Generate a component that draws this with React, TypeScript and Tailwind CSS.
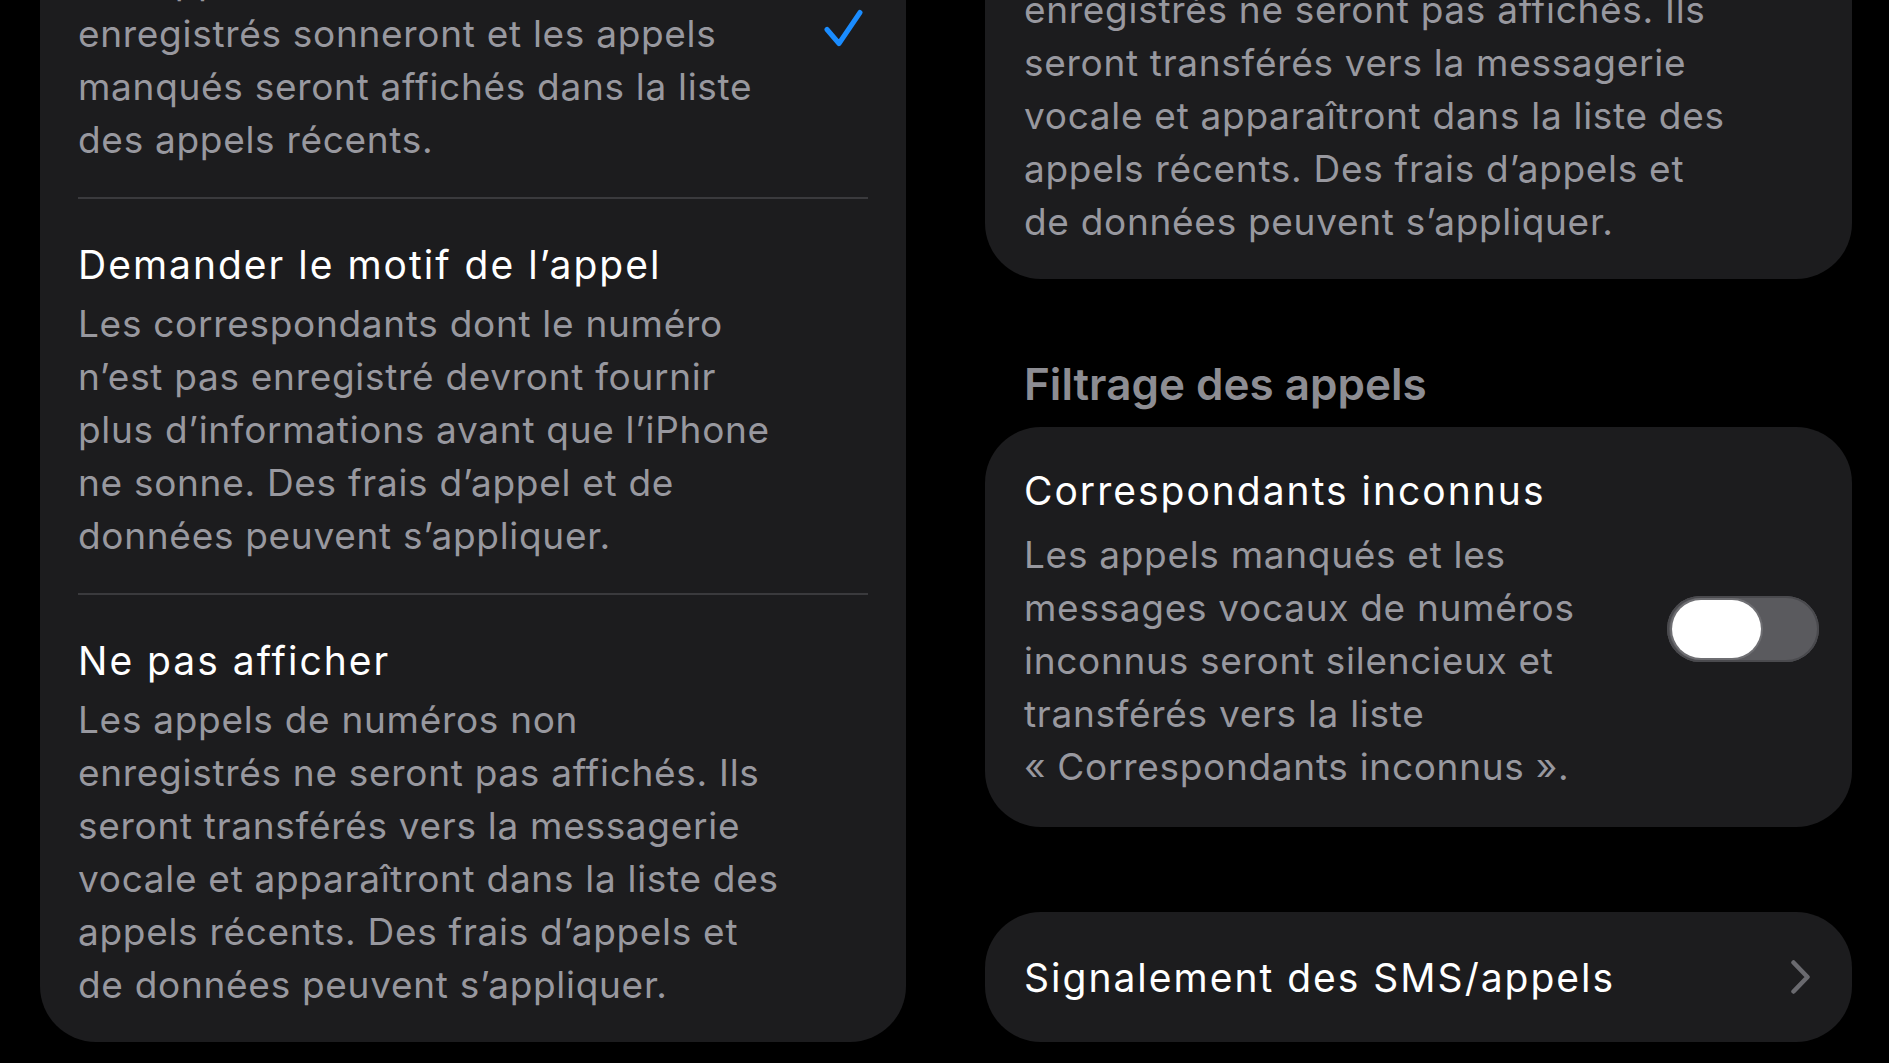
import React from "react";

type Option = {
  title: string;
  lines: string[];
  checked?: boolean;
};

const options: Option[] = [
  {
    title: "Ne pas filtrer",
    lines: [
      "Les appels de numéros non",
      "enregistrés sonneront et les appels",
      "manqués seront affichés dans la liste",
      "des appels récents.",
    ],
    checked: true,
  },
  {
    title: "Demander le motif de l’appel",
    lines: [
      "Les correspondants dont le numéro",
      "n’est pas enregistré devront fournir",
      "plus d’informations avant que l’iPhone",
      "ne sonne. Des frais d’appel et de",
      "données peuvent s’appliquer.",
    ],
  },
  {
    title: "Ne pas afficher",
    lines: [
      "Les appels de numéros non",
      "enregistrés ne seront pas affichés. Ils",
      "seront transférés vers la messagerie",
      "vocale et apparaîtront dans la liste des",
      "appels récents. Des frais d’appels et",
      "de données peuvent s’appliquer.",
    ],
  },
];

function Lines({ lines }: { lines: string[] }) {
  return (
    <div className="text-[37px] leading-[53px] tracking-[0.7px] text-[#98989f]">
      {lines.map((l) => (
        <div key={l} className="whitespace-nowrap">
          {l}
        </div>
      ))}
    </div>
  );
}

function Check() {
  return (
    <svg width="40" height="40" viewBox="0 0 40 40" className="-mt-[4px] mr-[4px] shrink-0">
      <path
        d="M3 20.5 L15 34.5 L36 3.5"
        fill="none"
        stroke="#1a8cff"
        strokeWidth="5"
        strokeLinecap="round"
        strokeLinejoin="round"
      />
    </svg>
  );
}

function OptionRow({ opt }: { opt: Option }) {
  return (
    <div className="flex items-center pt-[39px] pb-[31px]">
      <div className="flex-1">
        <div className="text-[39px] leading-[53px] tracking-[2px] text-white">{opt.title}</div>
        <div className="mt-[6px]">
          <Lines lines={opt.lines} />
        </div>
      </div>
      {opt.checked && <Check />}
    </div>
  );
}

function Toggle() {
  return (
    <div className="flex h-[66px] w-[152px] shrink-0 items-center rounded-full bg-[#5a5a5e] p-[5px] shadow-[inset_0_0_0_2px_#4a4a4e]">
      <div className="h-[58px] w-[89px] rounded-full bg-white shadow-[0_0_0_2px_#6e6e72]" />
    </div>
  );
}

function Chevron() {
  return (
    <svg width="20" height="34" viewBox="0 0 20 34" className="shrink-0">
      <path
        d="M2.5 2.5 L16.5 17 L2.5 31.5"
        fill="none"
        stroke="#6a6a6f"
        strokeWidth="4.5"
        strokeLinecap="round"
        strokeLinejoin="round"
      />
    </svg>
  );
}

export default function App() {
  return (
    <div className="flex h-[1063px] w-full gap-[79px] overflow-hidden bg-black pl-[40px] pr-[37px] font-[Inter,'Noto_Sans',sans-serif] antialiased">
      {/* Left column: option list, scrolled */}
      <div className="w-[866px] shrink-0">
        <div className="-mt-[144px] rounded-[56px] bg-[#1c1c1e] px-[38px]">
          {options.map((opt, i) => (
            <div key={opt.title}>
              {i > 0 && <div className="h-[2px] bg-[#3a3a3d]" />}
              <OptionRow opt={opt} />
            </div>
          ))}
        </div>
      </div>

      {/* Right column */}
      <div className="w-[867px] shrink-0">
        <div className="-mt-[168px] rounded-[56px] bg-[#1c1c1e] px-[39px]">
          <OptionRow opt={options[2]} />
        </div>

        <div className="mt-[79px] pl-[39px] text-[44px] font-semibold leading-[53px] text-[#8d8d93]">
          Filtrage des appels
        </div>

        <div className="mt-[16px] flex items-center rounded-[56px] bg-[#1c1c1e] pb-[34px] pl-[39px] pr-[33px] pt-[37px]">
          <div className="flex-1">
            <div className="text-[39px] leading-[53px] tracking-[2px] text-white">
              Correspondants inconnus
            </div>
            <div className="mt-[11px]">
              <Lines
                lines={[
                  "Les appels manqués et les",
                  "messages vocaux de numéros",
                  "inconnus seront silencieux et",
                  "transférés vers la liste",
                  "«\u00a0Correspondants inconnus\u00a0».",
                ]}
              />
            </div>
          </div>
          <Toggle />
        </div>

        <div className="mt-[85px] flex h-[130px] items-center rounded-[56px] bg-[#1c1c1e] pl-[39px] pr-[41px]">
          <div className="flex-1 text-[39px] leading-[53px] tracking-[2px] text-white">
            Signalement des SMS/appels
          </div>
          <Chevron />
        </div>
      </div>
    </div>
  );
}
